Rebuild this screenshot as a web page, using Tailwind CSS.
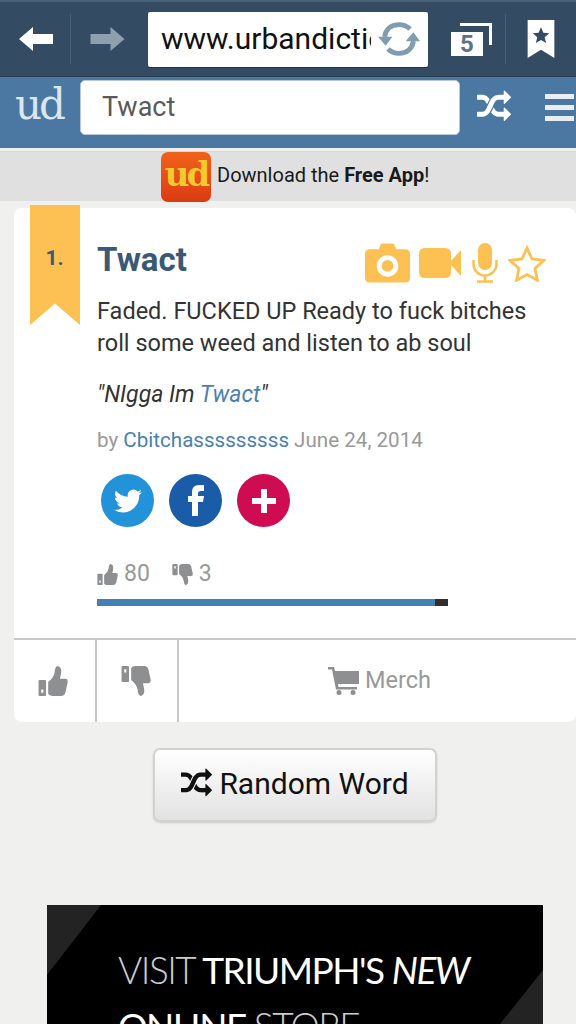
<!DOCTYPE html>
<html lang="en">
<head>
    <meta charset="UTF-8">
    <meta name="viewport" content="width=device-width, initial-scale=1.0">
    <title>Twact - Urban Dictionary</title>
    <script src="https://cdn.jsdelivr.net/npm/@tailwindcss/browser@4"></script>
</head>
<body class="bg-[#f0f0ee] h-[1024px] overflow-hidden font-['Roboto',sans-serif]">

    <!-- Browser toolbar -->
    <div class="h-[77px] bg-[#344c63] border-t-2 border-[#4a6277] border-b border-b-[#2b3f52] flex items-center">
        <div class="w-[71px] h-[50px] flex items-center justify-center border-r border-[#4b6176]">
            <svg class="w-[34px] h-[24px] ml-[2px]" viewBox="0 0 34 24"><path d="M0 12 14 0v7h20v10H14v7z" fill="#fff"/></svg>
        </div>
        <div class="w-[77px] flex items-center justify-center">
            <svg class="w-[35px] h-[24px] mr-[5px]" viewBox="0 0 34 24"><path d="M34 12 20 0v7H0v10h20v7z" fill="#8e9fb0"/></svg>
        </div>
        <div class="w-[280px] h-[55px] bg-white rounded-[2px] pl-[13px] flex items-center shadow-[0_1px_1px_rgba(0,0,0,.3)]">
            <div class="w-[210px] overflow-hidden whitespace-nowrap text-[30px] leading-none text-[#111]">www.urbandictio</div>
            <svg class="w-[42px] h-[38px] ml-[7px]" viewBox="0 0 38 34" fill="none">
                <path d="M6 15C7 8 12 4 19 4c4 0 7 1 10 4" stroke="#7f9cb0" stroke-width="4.500"/>
                <path d="M32 19c-1 7-6 11-13 11-4 0-7-1-10-4" stroke="#7f9cb0" stroke-width="4.500"/>
                <path d="M0 15h13l-6 8zM25 19h13l-6-8z" fill="#7f9cb0"/>
            </svg>
        </div>
        <div class="w-[77px] flex items-center justify-center pl-[10px]">
            <div class="relative w-[41px] h-[33px]">
                <svg class="absolute inset-0 w-[41px] h-[33px]" viewBox="0 0 41 33" fill="#fff"><path d="M9 0h32v22h-3V3H9z"/><path d="M0 9h32v24H0z"/></svg>
                <span class="absolute left-[9px] top-[8px] text-[24px] leading-[26px] font-bold text-[#5d7287]">5</span>
            </div>
        </div>
        <div class="w-[71px] h-[50px] flex items-center justify-center border-l border-[#4b6176]">
            <svg class="w-[28px] h-[38px]" viewBox="0 0 26 37">
                <path d="M0 0h26v37L13 29 0 37z" fill="#fff"/>
                <path d="m13 7 2.3 5.4 5.7.5-4.400 3.800 1.400 5.700L13 19.400 8 22.400l1.400-5.700L5 12.900l5.700-.5z" fill="#344c63"/>
            </svg>
        </div>
    </div>

    <!-- Urban Dictionary header -->
    <div class="h-[71px] bg-[#4b78a2] flex items-center pb-[11px]">
        <div class="w-[80px] pl-[15px] pb-[4px] text-[42px] leading-none text-[#dbe7ee] font-['DejaVu_Serif',serif] tracking-[-3px]">ud</div>
        <div class="w-[380px] h-[55px] bg-white rounded-[5px] border border-[#b9c8d6] pl-[21px] flex items-center text-[27px] text-[#5a5a5a]">Twact</div>
        <div class="w-[67px] flex justify-center">
            <svg class="w-[34px] h-[34px]" viewBox="0 0 1792 1792" fill="#fff"><path d="M666 481q-60 92-137 273-22-45-37-72.500t-40.500-63.500-51-56.500-63-35-81.500-14.500h-224q-14 0-23-9t-9-23v-192q0-14 9-23t23-9h224q250 0 410 225zm1126 799q0 14-9 23l-320 320q-9 9-23 9-13 0-22.500-9.500t-9.500-22.500v-192q-32 0-85 .5t-81 1-73-1-71-5-64-10.500-63-18.500-58-28.500-59-40-55-53.500-56-69.500q59-93 136-273 22 45 37 72.500t40.500 63.500 51 56.500 63 35 81.500 14.500h256v-192q0-14 9-23t23-9q12 0 24 10l319 319q9 9 9 23zm0-896q0 14-9 23l-320 320q-9 9-23 9-13 0-22.500-9.500t-9.500-22.500v-192h-256q-48 0-87 15t-69 45-51 61.500-45 77.500q-32 62-78 171-29 66-49.500 111t-54 105-64 100-74 83-90 68.500-106.500 42-128 16.500h-224q-14 0-23-9t-9-23v-192q0-14 9-23t23-9h224q48 0 87-15t69-45 51-61.500 45-77.500q32-62 78-171 29-66 49.500-111t54-105 64-100 74-83 90-68.500 106.500-42 128-16.500h256v-192q0-14 9-23t23-9q12 0 24 10l319 319q9 9 9 23z"/></svg>
        </div>
        <div class="ml-[18px] flex flex-col gap-[6px]">
            <div class="w-[29px] h-[5px] bg-[#e8eef3]"></div>
            <div class="w-[29px] h-[5px] bg-[#e8eef3]"></div>
            <div class="w-[29px] h-[5px] bg-[#e8eef3]"></div>
        </div>
    </div>

    <!-- App banner -->
    <div class="mt-[3px] h-[50px] bg-[#e0e0e0] flex items-center pl-[161px] border-t border-[#d8d8d8]">
        <div class="w-[50px] h-[50px] rounded-[7px] bg-gradient-to-b from-[#f0621c] to-[#dc3a12] flex items-center justify-center text-[#f6c92f] font-bold text-[34px] leading-none font-['DejaVu_Serif',serif] tracking-[-3px] pb-[5px]">ud</div>
        <div class="ml-[6px] pb-[4px] text-[20px] text-[#1a1a1a]">Download the <b class="font-bold">Free App</b>!</div>
    </div>

    <!-- Definition card -->
    <div class="relative mt-[7px] ml-[14px] h-[514px] bg-white rounded-l-[8px] rounded-r-[8px] flex flex-col">
        <div class="absolute left-[16px] top-[-3px] w-[50px] h-[120px] bg-[#fdc153] [clip-path:polygon(0_0,100%_0,100%_100%,50%_82%,0_100%)] text-center pt-[38px] pr-[1px] text-[21px] font-bold text-[#3d5a73]">1.</div>

        <div class="flex-1 pl-[83px]">
            <div class="flex items-center h-[50px] mt-[26px] relative">
                <div class="text-[33px] leading-none font-bold text-[#3a5a73]">Twact</div>
                <div class="absolute left-[268px] top-[9px] flex items-center">
                    <svg class="w-[45px] h-[40px]" viewBox="0 0 46 40" fill="#fdc153" fill-rule="evenodd"><path d="M5 6h9l2-5q.400-1 2-1h10q1.600 0 2 1l2 5h9q5 0 5 5v24q0 5-5 5H5q-5 0-5-5V11q0-5 5-5zM23 12a11 11 0 1 0 0 22 11 11 0 0 0 0-22zm0 5a6 6 0 1 1 0 12 6 6 0 0 1 0-12z"/></svg>
                    <svg class="w-[42px] h-[30px] ml-[9px]" viewBox="0 0 42 30" fill="#fdc153"><path d="M6 0h20q6 0 6 6v18q0 6-6 6H6q-6 0-6-6V6q0-6 6-6zM32 13 42 2v26L32 17z"/></svg>
                    <svg class="w-[26px] h-[40px] ml-[11px]" viewBox="0 0 26 40" fill="none"><rect x="6" y="0" width="14" height="27" rx="7" fill="#fdc153"/><path d="M1.500 17v4a11.500 11.500 0 0 0 23 0v-4M13 33v5M5 38.500h16" stroke="#fdc153" stroke-width="2.500"/></svg>
                    <svg class="w-[38px] h-[37px] ml-[10px]" viewBox="0 0 38 37" fill="none"><path d="m19 3 5 11 12 1.400-9 8.100 2.500 11.800L19 29.500 8.500 35.300 11 23.500l-9-8.100L14 14z" stroke="#fdc153" stroke-width="2.800"/></svg>
                </div>
            </div>
            <div class="mt-[11px] text-[23.500px] leading-[32px] text-[#333] w-[450px]">Faded. FUCKED UP Ready to fuck bitches roll some weed and listen to ab soul</div>
            <div class="mt-[20px] text-[23px] leading-[32px] italic text-[#333]">"NIgga Im <span class="text-[#4a80b0]">Twact</span>"</div>
            <div class="mt-[15px] text-[20.600px] leading-[28px] text-[#999]">by <span class="text-[#4a80b0]">Cbitchasssssssss</span> June 24, 2014</div>

            <div class="mt-[20px] ml-[4px] flex gap-[15px]">
                <div class="w-[53px] h-[53px] rounded-full bg-[#2293d8] flex items-center justify-center">
                    <svg class="w-[32px] h-[32px]" viewBox="0 0 1792 1792" fill="#fff"><path d="M1684 408q-67 98-162 167 1 14 1 42 0 130-38 259.500t-115.500 248.500-184.500 210.500-258 146-323 54.500q-271 0-496-145 35 4 78 4 225 0 401-138-105-2-188-64.500t-114-159.500q33 5 61 5 43 0 85-11-112-23-185.500-111.500t-73.500-205.500v-4q68 38 146 41-66-44-105-115t-39-154q0-88 44-163 121 149 294.500 238.500t371.500 99.500q-8-38-8-74 0-134 94.500-228.500t228.500-94.500q140 0 236 102 109-21 205-78-37 115-142 182 92-10 184-50z"/></svg>
                </div>
                <div class="w-[53px] h-[53px] rounded-full bg-[#1a5ca8] flex items-center justify-center">
                    <svg class="w-[16px] h-[31px]" viewBox="0 0 16 31" fill="#fff"><path d="M4 31V17H0v-6h4V7q0-7 7-7h5v6h-3q-3 0-3 2.500V11h6l-1 6h-5v14z"/></svg>
                </div>
                <div class="w-[53px] h-[53px] rounded-full bg-[#cf0b52] flex items-center justify-center">
                    <svg class="w-[24px] h-[24px]" viewBox="0 0 24 24" fill="#fff"><path d="M9 0h6v9h9v6h-9v9H9v-9H0V9h9z"/></svg>
                </div>
            </div>

            <div class="mt-[33px] flex items-center text-[23px] leading-[28px] text-[#999]">
                <svg class="w-[21px] h-[21px]" viewBox="0 0 27 28" fill="#8e8f91" fill-rule="evenodd"><path d="M0 14q0-1 1-1h5q1 0 1 1v13q0 1-1 1H1q-1 0-1-1zM2.500 22v3h2v-3zM9 15q5-4 6-9 .5-6 3-6 4 1 3 7l-1 5h5q3 0 2 4l-2 9q-1 3-4 3H13q-3 0-4-2z"/></svg>
                <span class="ml-[6px]">80</span>
                <svg class="ml-[22px] w-[21px] h-[21px] -scale-y-100" viewBox="0 0 27 28" fill="#8e8f91" fill-rule="evenodd"><path d="M0 14q0-1 1-1h5q1 0 1 1v13q0 1-1 1H1q-1 0-1-1zM2.500 22v3h2v-3zM9 15q5-4 6-9 .5-6 3-6 4 1 3 7l-1 5h5q3 0 2 4l-2 9q-1 3-4 3H13q-3 0-4-2z"/></svg>
                <span class="ml-[6px]">3</span>
            </div>
            <div class="mt-[11px] w-[351px] h-[7px] bg-[#4380b4] flex justify-end">
                <div class="w-[13px] h-full bg-[#2f2f2f]"></div>
            </div>
        </div>

        <!-- Vote row -->
        <div class="h-[84px] border-t-2 border-[#c9c9c9] flex">
            <div class="w-[83px] border-r-2 border-[#c9c9c9] flex items-center justify-center pr-[4px]">
                <svg class="w-[30px] h-[30px]" viewBox="0 0 27 28" fill="#8e8f91" fill-rule="evenodd"><path d="M0 14q0-1 1-1h5q1 0 1 1v13q0 1-1 1H1q-1 0-1-1zM2.500 22v3h2v-3zM9 15q5-4 6-9 .5-6 3-6 4 1 3 7l-1 5h5q3 0 2 4l-2 9q-1 3-4 3H13q-3 0-4-2z"/></svg>
            </div>
            <div class="w-[82px] border-r-2 border-[#c9c9c9] flex items-center justify-center pr-[2px]">
                <svg class="w-[30px] h-[30px] -scale-y-100" viewBox="0 0 27 28" fill="#8e8f91" fill-rule="evenodd"><path d="M0 14q0-1 1-1h5q1 0 1 1v13q0 1-1 1H1q-1 0-1-1zM2.500 22v3h2v-3zM9 15q5-4 6-9 .5-6 3-6 4 1 3 7l-1 5h5q3 0 2 4l-2 9q-1 3-4 3H13q-3 0-4-2z"/></svg>
            </div>
            <div class="flex-1 flex items-center pl-[149px] text-[23.500px] text-[#999]">
                <svg class="w-[31px] h-[28px]" viewBox="0 0 31 28" fill="#8e8f91"><path d="M0 0h6l1 4h24v13H10l.5 3H29v2.500H8L4 2.500H0z"/><circle cx="11" cy="25.500" r="2.500"/><circle cx="25" cy="25.500" r="2.500"/></svg>
                <span class="ml-[6px]">Merch</span>
            </div>
        </div>
    </div>

    <!-- Random word button -->
    <div class="mt-[26px] ml-[153px] w-[284px] h-[74px] rounded-[7px] border-2 border-[#d2d2d0] bg-gradient-to-b from-white to-[#e2e2e2] shadow-[0_1px_2px_rgba(0,0,0,.15)] flex items-center justify-center pb-[3px] text-[30px] text-[#111]">
        <svg class="w-[31px] h-[31px]" viewBox="0 0 1792 1792" fill="#111"><path d="M666 481q-60 92-137 273-22-45-37-72.500t-40.500-63.500-51-56.500-63-35-81.500-14.500h-224q-14 0-23-9t-9-23v-192q0-14 9-23t23-9h224q250 0 410 225zm1126 799q0 14-9 23l-320 320q-9 9-23 9-13 0-22.500-9.500t-9.500-22.500v-192q-32 0-85 .5t-81 1-73-1-71-5-64-10.500-63-18.500-58-28.500-59-40-55-53.500-56-69.500q59-93 136-273 22 45 37 72.500t40.500 63.500 51 56.500 63 35 81.500 14.500h256v-192q0-14 9-23t23-9q12 0 24 10l319 319q9 9 9 23zm0-896q0 14-9 23l-320 320q-9 9-23 9-13 0-22.500-9.500t-9.500-22.500v-192h-256q-48 0-87 15t-69 45-51 61.500-45 77.500q-32 62-78 171-29 66-49.500 111t-54 105-64 100-74 83-90 68.500-106.500 42-128 16.500h-224q-14 0-23-9t-9-23v-192q0-14 9-23t23-9h224q48 0 87-15t69-45 51-61.500 45-77.500q32-62 78-171 29-66 49.500-111t54-105 64-100 74-83 90-68.500 106.500-42 128-16.500h256v-192q0-14 9-23t23-9q12 0 24 10l319 319q9 9 9 23z"/></svg>
        <span class="ml-[7px]">Random Word</span>
    </div>

    <!-- Ad -->
    <div class="relative mt-[83px] ml-[47px] w-[496px] h-[119px] bg-black overflow-hidden">
        <svg class="absolute inset-0 w-[496px] h-[119px]" viewBox="0 0 496 119" fill="#232323"><path d="M0 0h54L0 70zM496 65v54h-43z"/></svg>
        <div class="relative pl-[71px] pt-[37px] font-['Lato',sans-serif] text-[37px] leading-[56px] text-white tracking-[-1.500px] whitespace-nowrap">
            <div><span class="font-light text-[#ccc]">VISIT</span> <span class="font-normal">TRIUMPH'S</span> <i class="font-normal">NEW</i></div>
            <div><span class="font-normal">ONLINE</span> <span class="font-light text-[#ccc]">STORE</span></div>
        </div>
    </div>

</body>
</html>
